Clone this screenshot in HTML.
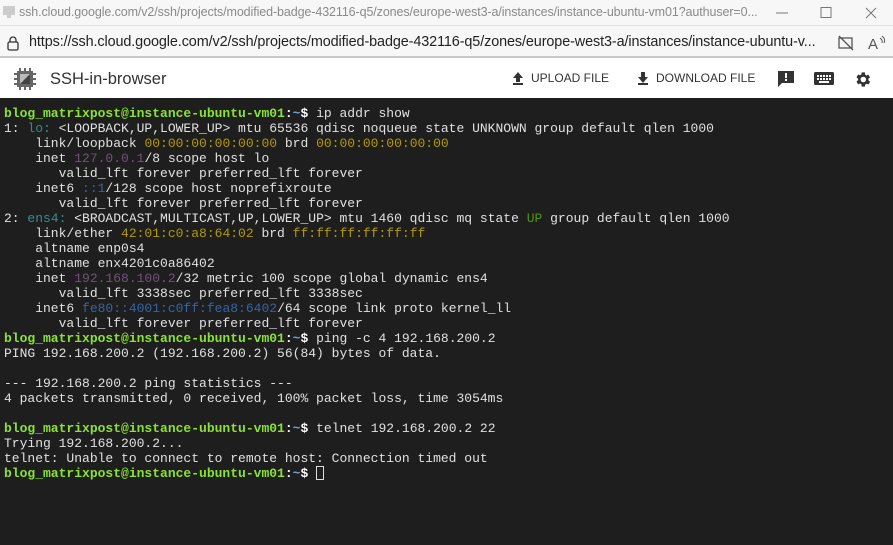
<!DOCTYPE html>
<html><head><meta charset="utf-8"><style>
*{margin:0;padding:0;box-sizing:border-box}
body{width:893px;height:545px;overflow:hidden;background:#1e1e1e;font-family:"Liberation Sans",sans-serif}
#title{position:absolute;left:0;top:0;width:893px;height:26px;background:#f7f7f7;border-bottom:1px solid #e2e2e2}
#title .t{position:absolute;left:19px;top:5px;font-size:12.5px;color:#8a8a8a;letter-spacing:-0.1px}
#addr{position:absolute;left:0;top:26px;width:893px;height:32px;background:#f7f7f7;border-bottom:2px solid #c8c8c8}
#addr .u{position:absolute;left:29px;top:8px;font-size:14.4px;color:#222;letter-spacing:-0.1px}
#bar{position:absolute;left:0;top:58px;width:893px;height:40px;background:#fff}
#bar .n{position:absolute;left:50px;top:12px;font-size:16.5px;color:#333}
#bar .b{position:absolute;top:13px;font-size:12px;color:#333}
#term{position:absolute;left:0;top:98px;width:893px;height:447px;background:#1e1e1e;padding:8px 0 0 4px;font-family:"Liberation Mono",monospace;font-size:13px;line-height:15px;color:#e0e0e0;white-space:pre}
.p{color:#8ae234;font-weight:bold}.w{color:#fff;font-weight:bold}.tl{color:#729fcf;font-weight:bold}
.c{color:#2f8f8f}.y{color:#b39a00}.v{color:#75507b}.bl{color:#3465a4}.g{color:#4e9a06}
.cur{display:inline-block;width:8px;height:14px;border:1px solid #ddd;vertical-align:-3px}
</style></head><body>
<div id="title">
<svg style="position:absolute;left:2px;top:5px" width="14" height="14"><rect x="1" y="1" width="12" height="9" fill="#ccc"/><rect x="5" y="10" width="4" height="3" fill="#ccc"/></svg>
<div class="t">ssh.cloud.google.com/v2/ssh/projects/modified-badge-432116-q5/zones/europe-west3-a/instances/instance-ubuntu-vm01?authuser=0...</div>
<svg style="position:absolute;left:774px;top:6px" width="110" height="14"><line x1="2" y1="7" x2="14" y2="7" stroke="#777"/><rect x="47" y="1.5" width="10" height="10" fill="none" stroke="#777"/><path d="M92 2l10 10M102 2l-10 10" stroke="#777"/></svg>
</div>
<div id="addr">
<svg style="position:absolute;left:6px;top:9px" width="14" height="16"><path d="M4 7V5a3 3 0 0 1 6 0v2" fill="none" stroke="#333" stroke-width="1.3"/><rect x="2" y="7" width="10" height="8" rx="1.5" fill="none" stroke="#333" stroke-width="1.3"/></svg>
<div class="u">https://ssh.cloud.google.com/v2/ssh/projects/modified-badge-432116-q5/zones/europe-west3-a/instances/instance-ubuntu-v...</div>
<svg style="position:absolute;left:838px;top:9px" width="50" height="16"><rect x="1" y="3" width="13" height="10" fill="none" stroke="#555" stroke-width="1.3"/><line x1="1" y1="1" x2="15" y2="15" stroke="#555" stroke-width="1.3"/><text x="30" y="14" font-size="15" fill="#555" font-family="Liberation Sans">A</text><path d="M42 3q3 2 2 5M44 1q4 3 2 7" stroke="#555" fill="none"/></svg>
</div>
<div id="bar">
<svg style="position:absolute;left:12px;top:8px" width="26" height="26"><g fill="#666"><rect x="5" y="5" width="16" height="16"/><rect x="2" y="7" width="3" height="2"/><rect x="2" y="12" width="3" height="2"/><rect x="2" y="17" width="3" height="2"/><rect x="21" y="7" width="3" height="2"/><rect x="21" y="12" width="3" height="2"/><rect x="21" y="17" width="3" height="2"/><rect x="7" y="2" width="2" height="3"/><rect x="12" y="2" width="2" height="3"/><rect x="17" y="2" width="2" height="3"/><rect x="7" y="21" width="2" height="3"/><rect x="12" y="21" width="2" height="3"/><rect x="17" y="21" width="2" height="3"/></g><rect x="8" y="8" width="10" height="10" fill="#bbb"/><path d="M8 18L18 8V18Z" fill="#444"/></svg>
<div class="n">SSH-in-browser</div>
<svg style="position:absolute;left:511px;top:13px" width="14" height="14"><path d="M2 7l5-6 5 6H9v4H5V7z M2 12h10v2H2z" fill="#333"/></svg>
<div class="b" style="left:531px">UPLOAD FILE</div>
<svg style="position:absolute;left:636px;top:13px" width="14" height="14"><path d="M5 1h4v5h3l-5 6-5-6h3z M2 12h10v2H2z" fill="#333"/></svg>
<div class="b" style="left:656px">DOWNLOAD FILE</div>
<svg style="position:absolute;left:777px;top:12px" width="18" height="18"><path d="M1 1h16v12H5l-4 4z" fill="#333"/><rect x="8" y="3" width="2" height="5" fill="#fff"/><rect x="8" y="9" width="2" height="2" fill="#fff"/></svg>
<svg style="position:absolute;left:813px;top:13px" width="22" height="16"><rect x="1" y="1" width="20" height="13" rx="1.5" fill="#333"/><g fill="#fff"><rect x="4" y="4" width="2" height="2"/><rect x="7" y="4" width="2" height="2"/><rect x="10" y="4" width="2" height="2"/><rect x="13" y="4" width="2" height="2"/><rect x="16" y="4" width="2" height="2"/><rect x="4" y="7" width="2" height="2"/><rect x="7" y="7" width="2" height="2"/><rect x="10" y="7" width="2" height="2"/><rect x="13" y="7" width="2" height="2"/><rect x="16" y="7" width="2" height="2"/><rect x="6" y="10" width="10" height="2"/></g></svg>
<svg style="position:absolute;left:853px;top:12px" width="19" height="19" viewBox="0 0 24 24"><path fill="#333" d="M19.4 13a7.5 7.5 0 0 0 0-2l2.1-1.6-2-3.5-2.5 1a7 7 0 0 0-1.7-1L15 3h-4l-.4 2.7a7 7 0 0 0-1.7 1l-2.5-1-2 3.5L6.5 11a7.5 7.5 0 0 0 0 2l-2.1 1.6 2 3.5 2.5-1a7 7 0 0 0 1.700 1L11 21h4l.4-2.7a7 7 0 0 0 1.7-1l2.5 1 2-3.5zM13 15.5a3.5 3.5 0 1 1 0-7 3.5 3.5 0 0 1 0 7z"/></svg>
</div>
<div id="term"><span class="p">blog_matrixpost@instance-ubuntu-vm01</span><span class="w">:</span><span class="tl">~</span><span class="w">$</span> ip addr show
1: <span class="c">lo:</span> &lt;LOOPBACK,UP,LOWER_UP&gt; mtu 65536 qdisc noqueue state UNKNOWN group default qlen 1000
    link/loopback <span class="y">00:00:00:00:00:00</span> brd <span class="y">00:00:00:00:00:00</span>
    inet <span class="v">127.0.0.1</span>/8 scope host lo
       valid_lft forever preferred_lft forever
    inet6 <span class="bl">::1</span>/128 scope host noprefixroute
       valid_lft forever preferred_lft forever
2: <span class="c">ens4:</span> &lt;BROADCAST,MULTICAST,UP,LOWER_UP&gt; mtu 1460 qdisc mq state <span class="g">UP</span> group default qlen 1000
    link/ether <span class="y">42:01:c0:a8:64:02</span> brd <span class="y">ff:ff:ff:ff:ff:ff</span>
    altname enp0s4
    altname enx4201c0a86402
    inet <span class="v">192.168.100.2</span>/32 metric 100 scope global dynamic ens4
       valid_lft 3338sec preferred_lft 3338sec
    inet6 <span class="bl">fe80::4001:c0ff:fea8:6402</span>/64 scope link proto kernel_ll
       valid_lft forever preferred_lft forever
<span class="p">blog_matrixpost@instance-ubuntu-vm01</span><span class="w">:</span><span class="tl">~</span><span class="w">$</span> ping -c 4 192.168.200.2
PING 192.168.200.2 (192.168.200.2) 56(84) bytes of data.

--- 192.168.200.2 ping statistics ---
4 packets transmitted, 0 received, 100% packet loss, time 3054ms

<span class="p">blog_matrixpost@instance-ubuntu-vm01</span><span class="w">:</span><span class="tl">~</span><span class="w">$</span> telnet 192.168.200.2 22
Trying 192.168.200.2...
telnet: Unable to connect to remote host: Connection timed out
<span class="p">blog_matrixpost@instance-ubuntu-vm01</span><span class="w">:</span><span class="tl">~</span><span class="w">$</span> <span class="cur"></span></div>
</body></html>
